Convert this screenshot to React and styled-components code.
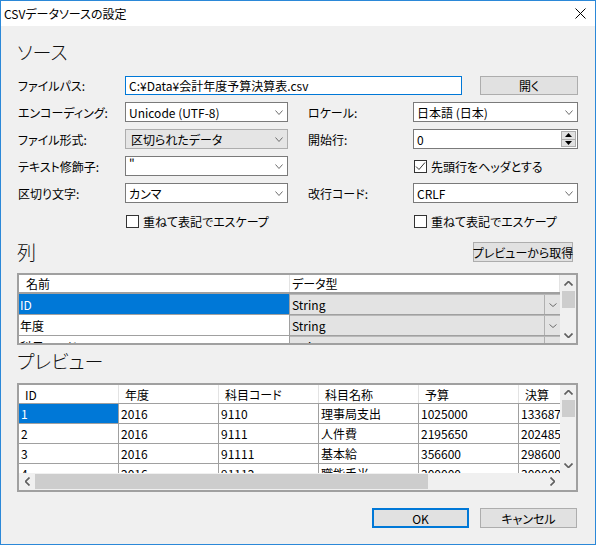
import React from "react";
import styled, { createGlobalStyle } from "styled-components";

const GlobalStyle = createGlobalStyle`
  html, body { margin: 0; padding: 0; background: #ffffff; }
  body {
    font-family: "Noto Sans CJK JP", "Noto Sans", sans-serif;
    font-size: 12px;
    color: #000;
    font-feature-settings: "palt";
  }
  * { box-sizing: border-box; }
`;

const Window = styled.div`
  width: 596px;
  height: 545px;
  border: 1px solid #2b88d8;
  display: flex;
  flex-direction: column;
  background: #f0f0f0;
`;

const TitleBar = styled.div`
  height: 25px;
  flex-shrink: 0;
  background: #fff;
  display: flex;
  align-items: center;
  justify-content: space-between;
  padding: 0 9px 0 3px;
  line-height: 1;
`;

const Body = styled.div`
  flex: 1;
  display: flex;
  flex-direction: column;
  padding: 14px 17px 16px 16px;
`;

const Heading = styled.div`
  font-size: 19px;
  font-weight: 300;
  height: 24px;
  line-height: 24px;
  color: #111;
`;

const HeadingRow = styled.div`
  display: flex;
  align-items: center;
  justify-content: space-between;
  height: 24px;
  margin-top: ${(p) => p.$top || 0}px;
`;

const Form = styled.div`
  display: flex;
  flex-direction: column;
  gap: 7px;
  margin-top: 12px;
`;

const PathRow = styled.div`
  display: flex;
  align-items: center;
  height: 19px;
`;

const Label = styled.div`
  width: ${(p) => p.$w}px;
  flex-shrink: 0;
  padding-left: 1px;
  white-space: nowrap;
`;

const TextInput = styled.div`
  width: 337px;
  height: 19px;
  border: 1px solid #0078d7;
  background: #fff;
  display: flex;
  align-items: center;
  padding: 0 3px;
  white-space: nowrap;
  overflow: hidden;
`;

const Button = styled.div`
  width: ${(p) => p.$w || 98}px;
  height: ${(p) => p.$h || 20}px;
  margin-left: ${(p) => (p.$push ? "auto" : "0")};
  margin-right: ${(p) => p.$mr || 0}px;
  background: #e1e1e1;
  border: ${(p) => (p.$default ? "2px solid #0078d7" : "1px solid #adadad")};
  display: flex;
  align-items: center;
  justify-content: center;
  white-space: nowrap;
`;

const FieldRow = styled.div`
  display: grid;
  grid-template-columns: 271px 271px;
  column-gap: 19px;
  height: ${(p) => p.$h || 20}px;
  margin-top: ${(p) => p.$top || 0}px;
`;

const Field = styled.div`
  display: grid;
  grid-template-columns: ${(p) => p.$label}px 1fr;
  align-items: center;
`;

const Combo = styled.div`
  height: 20px;
  border: 1px solid ${(p) => (p.$locked ? "#adadad" : "#7a7a7a")};
  background: ${(p) => (p.$locked ? "#e5e5e5" : "#fff")};
  display: flex;
  align-items: center;
  justify-content: space-between;
  padding: 0 4px 0 ${(p) => (p.$locked ? 5 : 3)}px;
  white-space: nowrap;
`;

const Quote = styled.span`
  align-self: flex-start;
  line-height: 12px;
`;

const NumberBox = styled.div`
  height: 20px;
  border: 1px solid #7a7a7a;
  background: #fff;
  display: flex;
  align-items: center;
  justify-content: space-between;
  padding: 0 1px 0 3px;
`;

const Spin = styled.div`
  width: 15px;
  height: 16px;
  display: flex;
  flex-direction: column;
  border: 1px solid #adadad;
  background: #e1e1e1;
`;

const SpinHalf = styled.div`
  flex: 1;
  display: flex;
  align-items: center;
  justify-content: center;
  border-top: ${(p) => (p.$lower ? "1px solid #adadad" : "none")};
`;

const CheckLine = styled.label`
  display: flex;
  align-items: center;
  gap: 4px;
  white-space: nowrap;
  padding-left: 1px;
`;

const Box = styled.span`
  width: 13px;
  height: 13px;
  border: 1px solid #333;
  background: #fff;
  display: inline-flex;
  align-items: center;
  justify-content: center;
  flex-shrink: 0;
`;

/* ---------- data grid ---------- */

const GridFrame = styled.div`
  height: ${(p) => p.$h}px;
  margin-top: ${(p) => p.$top}px;
  border: 2px solid #a0a0a0;
  background: #fff;
  display: flex;
  flex-direction: column;
  overflow: hidden;
`;

const GridMain = styled.div`
  flex: 1;
  display: flex;
  min-height: 0;
`;

const GridTable = styled.div`
  flex: 1;
  overflow: hidden;
  display: flex;
  flex-direction: column;
  background: #fff;
`;

const HeaderRow = styled.div`
  display: flex;
  flex-shrink: 0;
  height: ${(p) => p.$h}px;
  border-bottom: ${(p) => p.$line}px solid #a0a0a0;
  background: #fff;
`;

const HeaderCell = styled.div`
  width: ${(p) => p.$w}px;
  flex-shrink: 0;
  border-right: 1px solid #e3e3e3;
  padding-left: ${(p) => p.$pad}px;
  display: flex;
  align-items: center;
  white-space: nowrap;
  overflow: hidden;
`;

const DataRow = styled.div`
  display: flex;
  flex-shrink: 0;
  height: ${(p) => p.$h}px;
  border-bottom: 1px solid #a0a0a0;
`;

const Cell = styled.div`
  width: ${(p) => p.$w}px;
  flex-shrink: 0;
  border-right: 1px solid #a0a0a0;
  padding-left: ${(p) => p.$pad}px;
  display: flex;
  align-items: center;
  white-space: nowrap;
  overflow: hidden;
  background: ${(p) => (p.$selected ? "#0078d7" : "#fff")};
  color: ${(p) => (p.$selected ? "#fff" : "#000")};
`;

const TypeCell = styled.div`
  width: ${(p) => p.$w}px;
  flex-shrink: 0;
  display: flex;
  align-items: stretch;
  background: #e3e3e3;
  border-top: 1px solid #b8b8b8;
`;

const TypeText = styled.div`
  flex: 1;
  padding-left: 2px;
  display: flex;
  align-items: center;
  white-space: nowrap;
`;

const TypeDrop = styled.div`
  width: 16px;
  border-left: 1px solid #b0b0b0;
  display: flex;
  align-items: center;
  justify-content: center;
`;

const VScroll = styled.div`
  width: 16px;
  flex-shrink: 0;
  background: #f0f0f0;
  display: flex;
  flex-direction: column;
`;

const ArrowBox = styled.div`
  width: ${(p) => p.$w || 16}px;
  height: ${(p) => p.$h || 16}px;
  flex-shrink: 0;
  display: flex;
  align-items: center;
  justify-content: center;
`;

const VThumb = styled.div`
  height: 17px;
  margin: 0 1px 0 2px;
  background: #cdcdcd;
  flex-shrink: 0;
`;

const Filler = styled.div`
  flex: 1;
`;

const HScroll = styled.div`
  height: 17px;
  flex-shrink: 0;
  display: flex;
  background: #f0f0f0;
`;

const HThumb = styled.div`
  width: 393px;
  margin: 1px 0;
  background: #cdcdcd;
`;

const Corner = styled.div`
  width: 16px;
  background: #f0f0f0;
`;

const Footer = styled.div`
  display: flex;
  justify-content: flex-end;
  gap: 11px;
  margin-top: 16px;
  padding-right: 1px;
`;

/* ---------- small drawings ---------- */

const ChevronSvg = styled.svg`
  display: block;
  transform: rotate(${(p) => p.$deg || 0}deg);
`;

const Chevron = ({ w = 7, h = 4, sw = 1, color = "#6d6d6d", deg = 0 }) => (
  <ChevronSvg $deg={deg} width={w + 1} height={h + 1} viewBox={`0 0 ${w + 1} ${h + 1}`}>
    <polyline
      points={`0.5,0.5 ${(w + 1) / 2},${h + 0.5} ${w + 0.5},0.5`}
      fill="none"
      stroke={color}
      strokeWidth={sw}
    />
  </ChevronSvg>
);

const ScrollChevron = ({ deg }) => <Chevron w={8} h={4} sw={1.7} color="#606060" deg={deg} />;

const Triangle = ({ up }) => (
  <svg width="7" height="4" viewBox="0 0 7 4">
    <polygon points={up ? "0,4 3.5,0 7,4" : "0,0 3.5,4 7,0"} fill="#000" />
  </svg>
);

const CheckBox = ({ checked, children }) => (
  <CheckLine>
    <Box>
      {checked && (
        <svg width="11" height="11" viewBox="0 0 11 11">
          <polyline points="1,5.5 4,8.5 10,1.5" fill="none" stroke="#333" strokeWidth="1" />
        </svg>
      )}
    </Box>
    {children}
  </CheckLine>
);

const ComboField = ({ label, value, locked, w }) => (
  <Field $label={w}>
    <Label $w={w}>{label}</Label>
    <Combo $locked={locked}>
      {value === '"' ? <Quote>{value}</Quote> : <span>{value}</span>}
      <Chevron />
    </Combo>
  </Field>
);

const columnTypes = [
  { name: "ID", type: "String", selected: true },
  { name: "年度", type: "String" },
  { name: "科目コード", type: "String" },
];

const previewHeaders = ["ID", "年度", "科目コード", "科目名称", "予算", "決算"];
const previewRows = [
  ["1", "2016", "9110", "理事局支出", "1025000", "1336875"],
  ["2", "2016", "9111", "人件費", "2195650", "2024850"],
  ["3", "2016", "91111", "基本給", "356600", "298600"],
  ["4", "2016", "91112", "職能手当", "300000", "300000"],
];

export default function App() {
  return (
    <>
      <GlobalStyle />
      <Window>
        <TitleBar>
          <span>CSVデータソースの設定</span>
          <svg width="11" height="11" viewBox="0 0 11 11">
            <path d="M0.5 0.5 L10.5 10.5 M10.5 0.5 L0.5 10.5" stroke="#000" strokeWidth="1" />
          </svg>
        </TitleBar>
        <Body>
          <Heading>ソース</Heading>
          <Form>
            <PathRow>
              <Label $w={108}>ファイルパス:</Label>
              <TextInput>C:¥Data¥会計年度予算決算表.csv</TextInput>
              <Button $push $h={19}>開く</Button>
            </PathRow>
            <FieldRow>
              <ComboField w={108} label="エンコーディング:" value="Unicode (UTF-8)" />
              <ComboField w={106} label="ロケール:" value="日本語 (日本)" />
            </FieldRow>
            <FieldRow>
              <ComboField w={108} label="ファイル形式:" value="区切られたデータ" locked />
              <Field $label={106}>
                <Label $w={106}>開始行:</Label>
                <NumberBox>
                  <span>0</span>
                  <Spin>
                    <SpinHalf>
                      <Triangle up />
                    </SpinHalf>
                    <SpinHalf $lower>
                      <Triangle />
                    </SpinHalf>
                  </Spin>
                </NumberBox>
              </Field>
            </FieldRow>
            <FieldRow>
              <ComboField w={108} label="テキスト修飾子:" value={'"'} />
              <Field $label={106}>
                <Label $w={106} />
                <CheckBox checked>先頭行をヘッダとする</CheckBox>
              </Field>
            </FieldRow>
            <FieldRow>
              <ComboField w={108} label="区切り文字:" value="カンマ" />
              <ComboField w={106} label="改行コード:" value="CRLF" />
            </FieldRow>
            <FieldRow $h={14} $top={3}>
              <Field $label={108}>
                <Label $w={108} />
                <CheckBox>重ねて表記でエスケープ</CheckBox>
              </Field>
              <Field $label={106}>
                <Label $w={106} />
                <CheckBox>重ねて表記でエスケープ</CheckBox>
              </Field>
            </FieldRow>
          </Form>

          <HeadingRow $top={13}>
            <Heading>列</Heading>
            <Button $w={100} $mr={5}>プレビューから取得</Button>
          </HeadingRow>

          <GridFrame $h={72} $top={9}>
            <GridMain>
              <GridTable>
                <HeaderRow $h={19} $line={2}>
                  <HeaderCell $w={271} $pad={7}>名前</HeaderCell>
                  <HeaderCell $w={270} $pad={2}>データ型</HeaderCell>
                </HeaderRow>
                {columnTypes.map((c) => (
                  <DataRow key={c.name} $h={21}>
                    <Cell $w={271} $pad={1} $selected={c.selected}>
                      {c.name}
                    </Cell>
                    <TypeCell $w={270}>
                      <TypeText>{c.type}</TypeText>
                      <TypeDrop>
                        <Chevron w={7} h={3} />
                      </TypeDrop>
                    </TypeCell>
                  </DataRow>
                ))}
              </GridTable>
              <VScroll>
                <ArrowBox>
                  <ScrollChevron deg={180} />
                </ArrowBox>
                <VThumb />
                <Filler />
                <ArrowBox>
                  <ScrollChevron />
                </ArrowBox>
              </VScroll>
            </GridMain>
          </GridFrame>

          <HeadingRow $top={4}>
            <Heading>プレビュー</Heading>
          </HeadingRow>

          <GridFrame $h={109} $top={10}>
            <GridMain>
              <GridTable>
                <HeaderRow $h={19} $line={1}>
                  {previewHeaders.map((h) => (
                    <HeaderCell key={h} $w={100} $pad={6}>
                      {h}
                    </HeaderCell>
                  ))}
                </HeaderRow>
                {previewRows.map((r, i) => (
                  <DataRow key={r[0]} $h={20}>
                    {r.map((v, j) => (
                      <Cell key={j} $w={100} $pad={2} $selected={i === 0 && j === 0}>
                        {v}
                      </Cell>
                    ))}
                  </DataRow>
                ))}
              </GridTable>
              <VScroll>
                <ArrowBox $h={15}>
                  <ScrollChevron deg={180} />
                </ArrowBox>
                <VThumb />
                <Filler />
                <ArrowBox>
                  <ScrollChevron />
                </ArrowBox>
              </VScroll>
            </GridMain>
            <HScroll>
              <ArrowBox $h={17}>
                <ScrollChevron deg={90} />
              </ArrowBox>
              <HThumb />
              <Filler />
              <ArrowBox $h={17}>
                <ScrollChevron deg={-90} />
              </ArrowBox>
              <Corner />
            </HScroll>
          </GridFrame>

          <Footer>
            <Button $w={97} $default>OK</Button>
            <Button $w={97}>キャンセル</Button>
          </Footer>
        </Body>
      </Window>
    </>
  );
}
